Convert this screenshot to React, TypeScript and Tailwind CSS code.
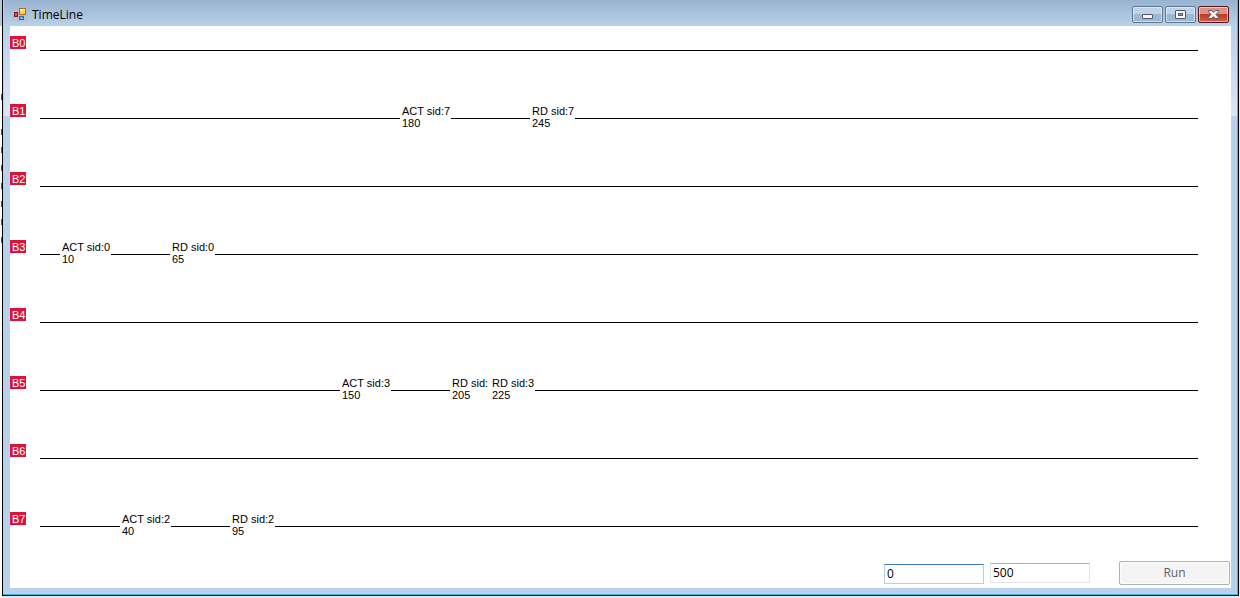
import { useState } from "react";

type TimelineEvent = { kind: "ACT" | "RD"; sid: number; time: number; covered?: boolean };
type Bank = { name: string; events: TimelineEvent[] };

const PIXELS_PER_TICK = 2;

const banks: Bank[] = [
  { name: "B0", events: [] },
  { name: "B1", events: [{ kind: "ACT", sid: 7, time: 180 }, { kind: "RD", sid: 7, time: 245 }] },
  { name: "B2", events: [] },
  { name: "B3", events: [{ kind: "ACT", sid: 0, time: 10 }, { kind: "RD", sid: 0, time: 65 }] },
  { name: "B4", events: [] },
  { name: "B5", events: [{ kind: "ACT", sid: 3, time: 150 }, { kind: "RD", sid: 3, time: 205, covered: true }, { kind: "RD", sid: 3, time: 225 }] },
  { name: "B6", events: [] },
  { name: "B7", events: [{ kind: "ACT", sid: 2, time: 40 }, { kind: "RD", sid: 2, time: 95 }] },
];

// Slivers of the editor window that lies behind this one.
const backgroundMarks = [94, 129, 147, 165, 183, 201, 219, 237];

function AppIcon() {
  return (
    <svg width="14" height="14" viewBox="0 0 14 14" shapeRendering="crispEdges" aria-hidden="true">
      <path d="M.5.5h13v13H.5zM5.5.5v13M.5 8.5h13" fill="none" stroke="#b4bac6" />
      <rect x="6" y="1" width="7" height="7" fill="#a87516" />
      <rect x="7" y="2" width="5" height="5" fill="#fbd04b" />
      <rect x="7" y="2" width="5" height="2" fill="#ffe98f" />
      <rect x="1" y="5" width="4" height="5" fill="#8f1512" />
      <rect x="2" y="6" width="2" height="3" fill="#e0503c" />
      <rect x="6" y="9" width="5" height="4" fill="#3565bd" />
      <rect x="7" y="10" width="3" height="2" fill="#7fa9f0" />
    </svg>
  );
}

function MinimizeIcon() {
  return (
    <svg width="11" height="5" viewBox="0 0 11 5" className="mt-1" aria-hidden="true">
      <rect x=".5" y=".5" width="10" height="4" rx=".5" fill="#f7f7f7" stroke="#535666" />
    </svg>
  );
}

function MaximizeIcon() {
  return (
    <svg width="11" height="9" viewBox="0 0 11 9" aria-hidden="true">
      <rect x=".5" y=".5" width="10" height="8" rx=".5" fill="#f7f7f7" stroke="#535666" />
      <rect x="3.5" y="3.5" width="4" height="2" fill="#8fb0d4" stroke="#535666" />
    </svg>
  );
}

function CloseIcon() {
  return (
    <svg width="11" height="9" viewBox="0 0 11 9" aria-hidden="true">
      <path d="M.5.5h3l2 1.8 2-1.8h3v1.2L8 4.5l2.5 2.8v1.2h-3l-2-1.8-2 1.8h-3V7.300L3 4.500.5 1.700Z" fill="#f7f7f7" stroke="#535666" />
    </svg>
  );
}

const captionButton =
  "flex h-[17px] w-[31px] items-center justify-center rounded-[2px] border shadow-[inset_0_0_0_1px_rgba(255,255,255,0.5)]";
const glassButton = "border-[#5f7892] bg-linear-to-b from-[#bfd2e6] from-50% to-[#9db8d4] to-50%";
const closeButton = "border-[#571420] bg-linear-to-b from-[#dc9285] from-45% via-[#bd3a24] via-50% to-[#d16549]";

function TitleBar() {
  return (
    <header className="flex h-[26px] items-start justify-between bg-linear-to-b from-[#98b3d0] to-[#b9d1ea] pt-[6px] pr-2 pl-[9px]">
      <div className="flex items-start gap-[5px] pt-px">
        <AppIcon />
        <h1 className="font-['Open_Sans',sans-serif] text-[12px] leading-4 text-black">TimeLine</h1>
      </div>
      <div className="flex gap-[2px]">
        <button type="button" aria-label="Minimize" className={`${captionButton} ${glassButton}`}>
          <MinimizeIcon />
        </button>
        <button type="button" aria-label="Maximize" className={`${captionButton} ${glassButton}`}>
          <MaximizeIcon />
        </button>
        <button type="button" aria-label="Close" className={`${captionButton} ${closeButton}`}>
          <CloseIcon />
        </button>
      </div>
    </header>
  );
}

function EventLabel({ event }: { event: TimelineEvent }) {
  return (
    <div
      className={`absolute top-[11px] overflow-hidden bg-white pl-[2px] whitespace-nowrap ${event.kind === "ACT" ? "w-[51px]" : "w-[45px]"}`}
      style={{ left: event.time * PIXELS_PER_TICK }}
    >
      <p className={event.covered ? "w-9 overflow-hidden" : ""}>
        {event.kind} sid:{event.sid}
      </p>
      <p>{event.time}</p>
    </div>
  );
}

function BankRow({ bank }: { bank: Bank }) {
  return (
    <li className="flex h-10 gap-[14px]">
      <span className="mt-[10px] h-[13px] w-4 bg-[#dc143c] pl-[2px] leading-[14px] text-white">{bank.name}</span>
      <div className="relative mr-[33px] flex-1">
        <div className="mt-6 h-px bg-black" />
        {bank.events.map((event) => (
          <EventLabel key={event.time} event={event} />
        ))}
      </div>
    </li>
  );
}

export default function App() {
  const [start, setStart] = useState("0");
  const [end, setEnd] = useState("500");

  return (
    <div className="flex min-h-screen items-start bg-[#e8e8eb] pr-px">
      <div className="relative w-[2px] self-stretch bg-linear-to-b from-[#b5cae0] from-[26px] to-white to-[26px]">
        {backgroundMarks.map((top) => (
          <span key={top} className="absolute left-px h-[6px] w-px bg-[#6a35b8]" style={{ top }} />
        ))}
      </div>
      <div className="flex-1 border-x border-b border-black">
        <div className="border-r border-b border-r-[#31c4e3] border-b-[#20c8e8] bg-[#b9d1ea] pl-px">
          <TitleBar />
          <div className="flex bg-[#b9d1ea] pb-[6px]">
            <div className="w-[6px] bg-linear-to-b from-[#b9d1ea] to-[#dae7f5] bg-[length:100%_90px] bg-no-repeat" />
            <main className="flex-1 bg-white font-['Liberation_Sans',Arial,sans-serif] text-[11px] leading-3 text-black">
              <ul className="flex flex-col gap-7">
                {banks.map((bank) => (
                  <BankRow key={bank.name} bank={bank} />
                ))}
              </ul>
              <form
                className="flex items-start justify-end gap-[6px] pt-[19px] pr-px pb-[3px] font-['Open_Sans',sans-serif] text-[12px]"
                onSubmit={(e) => e.preventDefault()}
              >
                <input
                  aria-label="Start time"
                  value={start}
                  onChange={(e) => setStart(e.target.value)}
                  className="mt-[3px] h-5 w-[100px] rounded-[1px] border border-[#b5cfe7] border-t-[#3d7bad] px-[2px] pb-[2px] outline-none"
                />
                <input
                  aria-label="End time"
                  value={end}
                  onChange={(e) => setEnd(e.target.value)}
                  className="mt-[2px] h-5 w-[100px] rounded-[1px] border border-[#e2e3ea] border-t-[#abadb3] px-[2px] pb-[2px] outline-none"
                />
                <button
                  type="submit"
                  disabled
                  className="ml-[23px] h-6 w-[111px] rounded-[2px] border border-[#adb2b5] bg-[#f4f4f4] text-[#5f5f5f] shadow-[inset_0_0_0_1px_#fcfcfc]"
                >
                  Run
                </button>
              </form>
            </main>
            <div className="w-[6px] bg-linear-to-b from-[#b9d1ea] to-[#dae7f5] bg-[length:100%_90px] bg-no-repeat" />
          </div>
        </div>
      </div>
    </div>
  );
}
